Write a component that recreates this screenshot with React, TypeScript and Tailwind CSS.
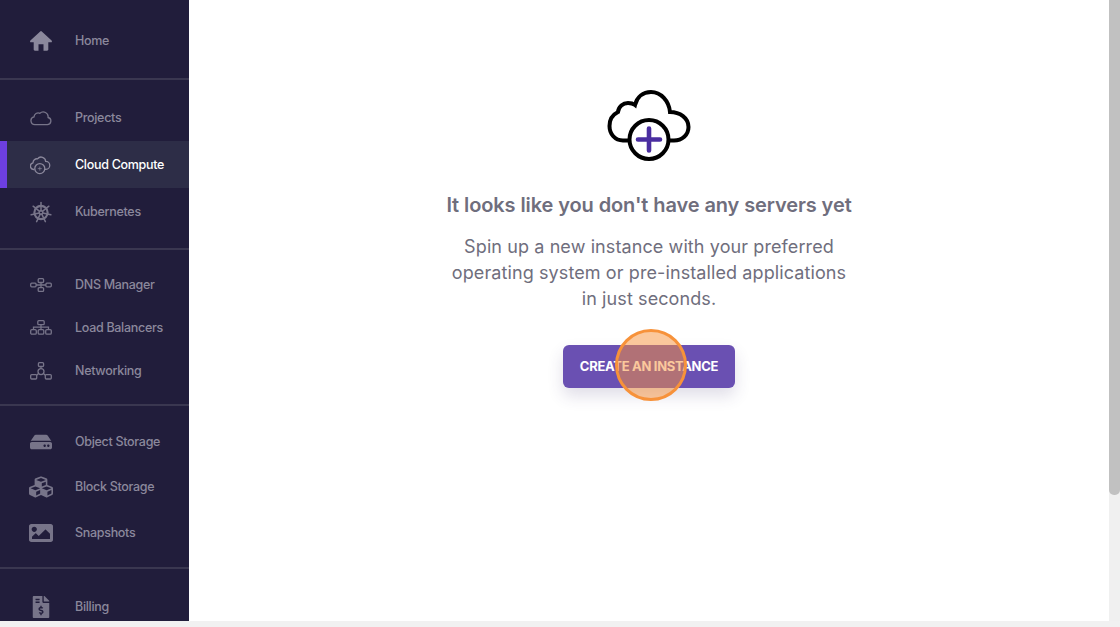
import React from 'react'
import { FaHdd, FaCubes, FaImage, FaFileInvoiceDollar } from 'react-icons/fa'

const line = { fill: 'none', stroke: 'currentColor', strokeWidth: 1.3 }

function HomeIcon() {
  return (
    <svg width="22" height="20" viewBox="0 0 22 20" fill="currentColor">
      <path d="M10.2.4a1.2 1.2 0 0 1 1.6 0l9.8 9.2c.7.7.3 1.7-.7 1.7h-2.6V18.6c0 .7-.5 1.2-1.2 1.2h-3.6v-6.6H8.5v6.6H4.9c-.7 0-1.2-.5-1.2-1.2v-7.3H1.1c-1 0-1.4-1-.7-1.7z" />
    </svg>
  )
}

function ProjectsIcon() {
  return (
    <svg width="22" height="16" viewBox="0 0 22 16" {...line}>
      <path d="M5 14.6h12.2a3.6 3.6 0 0 0 .9-7.1A4.9 4.9 0 0 0 9.9 3.3 4.2 4.2 0 0 0 4 6.9a3.9 3.9 0 0 0 1 7.7z" />
    </svg>
  )
}

function ComputeIcon() {
  return (
    <svg width="22" height="20" viewBox="1 0 22 20" {...line}>
      <path d="M5.5 14.5H4.6a3.4 3.4 0 0 1-.6-6.7 4 4 0 0 1 4.5-4 4.6 4.6 0 0 1 8.2 2.6 3.9 3.9 0 0 1 .2 7.9h-1" />
      <circle cx="10.8" cy="13.6" r="5" />
      <path d="M8.8 13.6h4M10.8 11.6v4" strokeWidth="0.7" />
    </svg>
  )
}

function WheelIcon() {
  const angles = [0, 51.4, 102.8, 154.3, 205.7, 257.1, 308.6]
  return (
    <svg width="22" height="22" viewBox="0 0 22 22" fill="none" stroke="currentColor">
      <circle cx="11" cy="11.5" r="6.6" strokeWidth="2.2" />
      <circle cx="11" cy="11.5" r="1.8" strokeWidth="1.4" />
      {angles.map((a) => (
        <g key={a} transform={`rotate(${a} 11 11.5)`}>
          <path d="M11 9.7V1.4" strokeWidth="1.5" strokeLinecap="round" />
        </g>
      ))}
    </svg>
  )
}

function DnsIcon() {
  return (
    <svg width="22" height="14" viewBox="0 0 22 14" {...line}>
      <rect x="8.2" y="0.7" width="5.4" height="3.8" rx="1" />
      <rect x="0.7" y="5.2" width="5.4" height="3.6" rx="1" />
      <rect x="15.9" y="5.2" width="5.4" height="3.6" rx="1" />
      <rect x="8.2" y="9.6" width="5.4" height="3.8" rx="1" />
      <path d="M6.1 7h9.8M11 4.5v5.1" />
    </svg>
  )
}

function BalancerIcon() {
  return (
    <svg width="22" height="15" viewBox="0 0 22 15" {...line}>
      <rect x="7.8" y="0.7" width="6.4" height="4" rx="1" />
      <rect x="0.7" y="9.6" width="5.6" height="4.6" rx="1.2" />
      <rect x="8.2" y="9.6" width="5.6" height="4.6" rx="1.2" />
      <rect x="15.7" y="9.6" width="5.6" height="4.6" rx="1.2" />
      <path d="M11 4.7v4.9M3.5 9.6V7.2h15v2.4" />
    </svg>
  )
}

function NetworkIcon() {
  return (
    <svg width="22" height="18" viewBox="0 0 22 18" {...line}>
      <rect x="8.4" y="0.7" width="5.2" height="3.8" rx="1" />
      <circle cx="11" cy="9.6" r="3" />
      <rect x="0.7" y="12.6" width="6" height="4.4" rx="1" />
      <rect x="15.3" y="12.6" width="6" height="4.4" rx="1" />
      <path d="M11 4.5v2.1M8.6 11.4l-1.9 1.9M13.4 11.4l1.9 1.9" />
    </svg>
  )
}

function NavRow({ icon, label, height, active }: { icon: React.ReactNode; label: string; height: string; active?: boolean }) {
  return (
    <div className={`flex items-center ${height} ${active ? 'bg-[#2d2d47] text-white' : 'text-[#8b889c]'}`}>
      <div className={`h-full w-[7px] shrink-0 ${active ? 'bg-[#6d3fe0]' : ''}`} />
      <div className={`flex w-[68px] shrink-0 items-center justify-center pr-[1px] ${active ? 'text-[#8b889c]' : 'text-[#777489]'}`}>{icon}</div>
      <span className="pt-[1px] text-[12.5px] font-medium tracking-[-0.3px] whitespace-nowrap">{label}</span>
    </div>
  )
}

function App() {
  return (
    <div className="flex h-[627px] w-[1120px] flex-col overflow-hidden bg-[#f1f1f1] font-['Inter','Liberation_Sans',sans-serif]">
      <div className="flex h-[621px]">
        <aside className="flex w-[189px] shrink-0 flex-col overflow-hidden bg-[#211d3b]">
          <div className="h-[80px] border-b-2 border-[#3a3750] pt-[4px]">
            <NavRow icon={<span className="text-[#8b889c]"><HomeIcon /></span>} label="Home" height="h-[74px]" />
          </div>
          <div className="border-b-2 border-[#3a3750] pt-[14px] pb-[13px]">
            <NavRow icon={<ProjectsIcon />} label="Projects" height="h-[47px]" />
            <NavRow icon={<ComputeIcon />} label="Cloud Compute" height="h-[47px]" active />
            <NavRow icon={<WheelIcon />} label="Kubernetes" height="h-[47px]" />
          </div>
          <div className="border-b-2 border-[#3a3750] pt-[13px] pb-[12px]">
            <NavRow icon={<DnsIcon />} label="DNS Manager" height="h-[43px]" />
            <NavRow icon={<BalancerIcon />} label="Load Balancers" height="h-[43px]" />
            <NavRow icon={<NetworkIcon />} label="Networking" height="h-[43px]" />
          </div>
          <div className="border-b-2 border-[#3a3750] pt-[13px] pb-[12px]">
            <NavRow icon={<FaHdd size={22} />} label="Object Storage" height="h-[45px]" />
            <NavRow icon={<FaCubes size={24} />} label="Block Storage" height="h-[46px]" />
            <NavRow icon={<FaImage size={24} />} label="Snapshots" height="h-[45px]" />
          </div>
          <div className="pt-[14px]">
            <NavRow icon={<FaFileInvoiceDollar size={22} />} label="Billing" height="h-[47px]" />
          </div>
        </aside>

        <main className="relative flex flex-1 flex-col items-center bg-white pt-[88px]">
          <svg width="88" height="75" viewBox="605 88 88 75" fill="none">
            <path d="M628 140.5H623C615 140.5 609.5 134 609.5 126C609.5 119 613 114.5 618 112C618.5 106.5 623 103 628 103C630.5 103 633 103.5 635 105C637 97 643 92 651 92C661 92 669 101 670 112C680 112 688.5 118 688.5 127C688.5 135 682 140.5 674 140.5H670" stroke="#000" strokeWidth="4" strokeLinecap="round" />
            <circle cx="649" cy="139.5" r="19.5" fill="#fff" stroke="#000" strokeWidth="4" />
            <path d="M638 139.5h22M649 128.5v22" stroke="#4a2ea0" strokeWidth="4.6" strokeLinecap="round" />
          </svg>
          <h1 className="mt-[27px] text-[20px] leading-[30px] font-semibold tracking-[-0.1px] text-[#6f6e7d]">It looks like you don't have any servers yet</h1>
          <p className="mt-[14px] w-[408px] text-center text-[18px] leading-[26px] tracking-[0.1px] text-[#6f6e7d]">
            Spin up a new instance with your preferred operating system or pre-installed applications in just seconds.
          </p>
          <button className="mt-[33px] flex h-[43px] w-[172px] items-center justify-center rounded-md bg-[#6a50b2] text-[13px] font-bold tracking-[-0.3px] text-white shadow-[0_8px_16px_rgba(60,50,110,0.16)]">
            CREATE AN INSTANCE
          </button>
          <div className="absolute top-[329px] left-[426px] h-[72px] w-[72px] rounded-full border-[3px] border-[#f7923a] bg-[#f7923a]/50" />
        </main>

        <div className="w-[11px] shrink-0 bg-[#f0f0f0]">
          <div className="h-[495px] rounded-b-[5px] bg-[#c1c1c1]" />
        </div>
      </div>
    </div>
  )
}

export default App
